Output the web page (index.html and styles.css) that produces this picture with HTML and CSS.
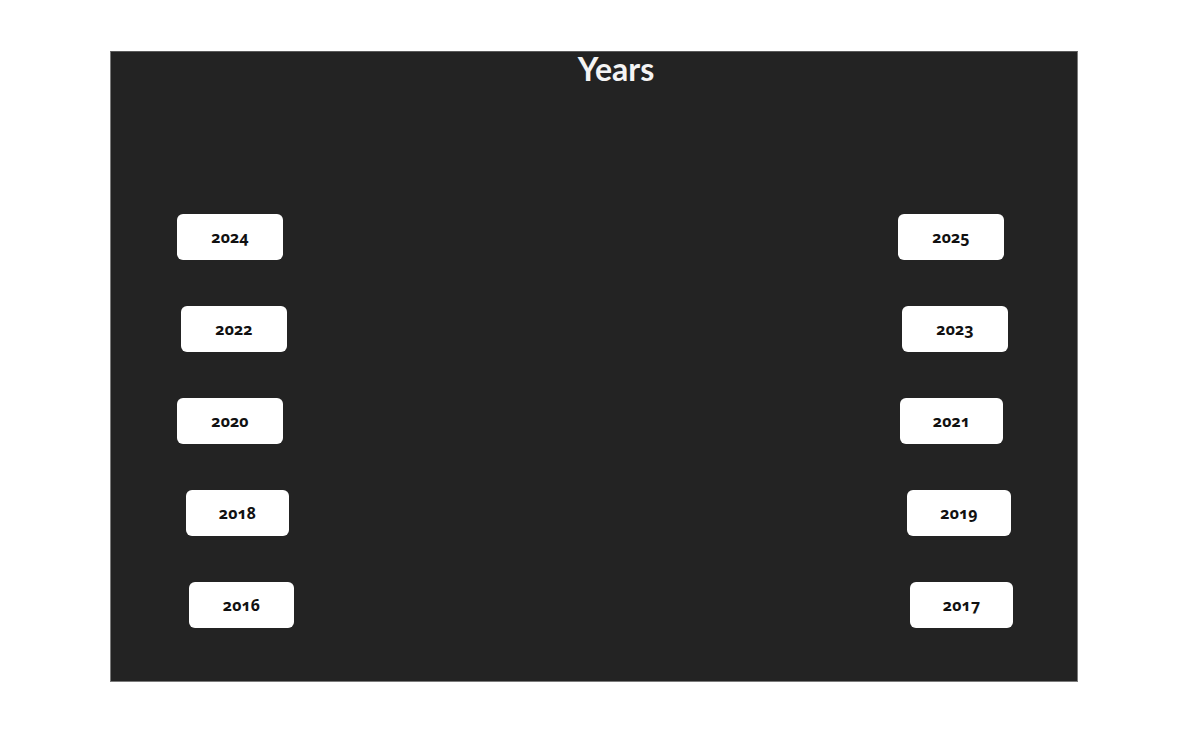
FILE: index.html
```html
<!DOCTYPE html>
<html>
<head>
    <title>Years</title>
    <link rel="stylesheet" href="styles.css">
</head>
<body>
    <div class="panel">
        <h1 class="title">Years</h1>
        <div class="years">
            <div class="row">
                <button class="year left l1">2024</button>
                <button class="year right r1">2025</button>
            </div>
            <div class="row">
                <button class="year left l2">2022</button>
                <button class="year right r2">2023</button>
            </div>
            <div class="row">
                <button class="year left l3">2020</button>
                <button class="year right r3">2021</button>
            </div>
            <div class="row">
                <button class="year left l4">2018</button>
                <button class="year right r4">2019</button>
            </div>
            <div class="row">
                <button class="year left l5">2016</button>
                <button class="year right r5">2017</button>
            </div>
        </div>
    </div>
</body>
</html>
```

FILE: styles.css
```css
body {
    margin: 0;
    background-color: #ffffff;
}

.panel {
    box-sizing: border-box;
    width: 968px;
    height: 631px;
    margin: 51px 0 0 110px;
    background-color: #232323;
    border: 1px solid #7a7a7a;
    border-top-color: #5a5a5a;
}

.title {
    margin: 0;
    text-align: center;
    font-family: Lato, sans-serif;
    font-weight: bold;
    font-size: 32px;
    line-height: 34px;
    color: #f4f4f4;
    padding-left: 44px;
}

.years {
    display: flex;
    flex-direction: column;
    gap: 46px;
    margin-top: 128px;
}

.row {
    display: flex;
    align-items: center;
}

.year {
    height: 46px;
    width: 106px;
    border: none;
    border-radius: 6px;
    background-color: #ffffff;
    color: #111111;
    font-family: "Noto Sans", sans-serif;
    font-variant-numeric: oldstyle-nums;
    font-weight: bold;
    font-size: 16px;
    padding: 0;
}

.right {
    margin-left: auto;
}

.l1 { margin-left: 66px; }
.l2 { margin-left: 70px; }
.l3 { margin-left: 66px; }
.l4 { margin-left: 75px; width: 103px; }
.l5 { margin-left: 78px; width: 105px; }

.r1 { margin-right: 73px; }
.r2 { margin-right: 69px; }
.r3 { margin-right: 74px; width: 103px; }
.r4 { margin-right: 66px; width: 104px; }
.r5 { margin-right: 64px; width: 103px; }
```
